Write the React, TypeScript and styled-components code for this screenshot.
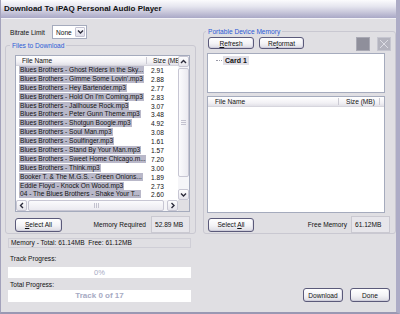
import React from 'react';
import styled, { createGlobalStyle } from 'styled-components';

const GlobalStyle = createGlobalStyle`
  * { box-sizing: border-box; }
  html, body { margin: 0; padding: 0; background: #e0dfe3; }
  body {
    font-family: "Liberation Sans", Arial, sans-serif;
    font-size: 6.6px;
    color: #111;
  }
`;

const files: [string, string][] = [
  ['Blues Brothers - Ghost Riders in the Sky...', '2.91'],
  ["Blues Brothers - Gimme Some Lovin'.mp3", '2.88'],
  ['Blues Brothers - Hey Bartender.mp3', '2.77'],
  ["Blues Brothers - Hold On I'm Coming.mp3", '2.83'],
  ['Blues Brothers - Jailhouse Rock.mp3', '3.07'],
  ['Blues Brothers - Peter Gunn Theme.mp3', '3.48'],
  ['Blues Brothers - Shotgun Boogie.mp3', '4.92'],
  ['Blues Brothers - Soul Man.mp3', '3.08'],
  ['Blues Brothers - Soulfinger.mp3', '1.61'],
  ['Blues Brothers - Stand By Your Man.mp3', '1.57'],
  ['Blues Brothers - Sweet Home Chicago.m...', '7.20'],
  ['Blues Brothers - Think.mp3', '3.00'],
  ['Booker T. & The M.G.S. - Green Onions...', '1.89'],
  ['Eddie Floyd - Knock On Wood.mp3', '2.73'],
  ['04 - The Blues Brothers - Shake Your T...', '2.60'],
];

const Window = styled.div`
  width: 400px;
  height: 314px;
  display: flex;
  flex-direction: column;
  background: #e0dfe3;
  border-left: 1px solid #a3a2bb;
  border-right: 4px solid #adacc6;
  border-bottom: 2px solid #9998b3;
  overflow: hidden;
`;

const TitleBar = styled.div`
  height: 19px;
  flex: none;
  display: flex;
  align-items: center;
  padding: 0 0 1px 3px;
  background: linear-gradient(#fbfbfd 0%, #e6e6ef 35%, #c6c5d9 70%, #a9a8c6 100%);
  border-bottom: 1px solid #f2f2f6;
  font-weight: bold;
  font-size: 8px;
  color: #111;
`;

const Content = styled.div`
  flex: 1;
  min-height: 0;
  display: grid;
  grid-template-columns: 192px 194px;
  column-gap: 6px;
  padding: 5px 0 10px 3px;
`;

const Column = styled.div`
  display: flex;
  flex-direction: column;
  min-width: 0;
`;

const BitrateRow = styled.div`
  height: 16px;
  display: flex;
  align-items: center;
  padding-left: 6px;
`;

const FieldLabel = styled.span`
  width: 42px;
`;

const Select = styled.div`
  width: 35px;
  height: 14px;
  display: flex;
  align-items: center;
  background: #fff;
  border: 1px solid #a5abbd;
  padding: 1px;
`;

const SelectValue = styled.span`
  flex: 1;
  padding-left: 2px;
`;

const SelectButton = styled.div`
  width: 10px;
  height: 100%;
  display: flex;
  align-items: center;
  justify-content: center;
  background: linear-gradient(#fbfbfd, #dedde8);
  border: 1px solid #c4c3d3;
  border-radius: 1px;
`;

const Group = styled.fieldset<{ $top: number; $pad: string }>`
  margin: ${p => p.$top}px 0 0 1px;
  padding: ${p => p.$pad};
  border: 1px solid #c9c8d1;
  border-radius: 3px;
  min-width: 0;
`;

const GroupTitle = styled.legend<{ $shift: number }>`
  padding: 0 2px;
  margin-left: ${p => p.$shift}px;
  line-height: 9px;
  color: #2c5bd6;
`;

const ListBox = styled.div<{ $height: number }>`
  height: ${p => p.$height}px;
  border: 1px solid #a5abbd;
  background: #fff;
  display: flex;
  flex-direction: column;
  overflow: hidden;
`;

const ScrollGrid = styled.div`
  flex: 1;
  min-height: 0;
  display: grid;
  grid-template-columns: 1fr 11px;
  grid-template-rows: 1fr 11px;
`;

const ListMain = styled.div`
  display: flex;
  flex-direction: column;
  overflow: hidden;
  min-width: 0;
`;

const ListHeader = styled.div`
  height: 10px;
  flex: none;
  display: flex;
  background: linear-gradient(#ffffff, #f2f1f5 65%, #e2e1e8);
  border-bottom: 1px solid #d6d5dd;
  overflow: hidden;
`;

const HeaderCell = styled.div<{ $width?: number; $pad: number }>`
  position: relative;
  flex: ${p => (p.$width ? 'none' : '1')};
  width: ${p => (p.$width ? `${p.$width}px` : 'auto')};
  padding-left: ${p => p.$pad}px;
  line-height: 9px;
  white-space: nowrap;
  overflow: hidden;
  &::after {
    content: '';
    position: absolute;
    right: 0;
    top: 1px;
    bottom: 1px;
    width: 1px;
    background: #cbcad3;
    box-shadow: 1px 0 0 #fff;
    display: ${p => (p.$width ? 'block' : 'none')};
  }
`;

const Rows = styled.div`
  flex: 1;
  overflow: hidden;
`;

const Row = styled.div`
  height: 8.9px;
  display: flex;
  align-items: center;
  white-space: nowrap;
`;

const NameCell = styled.div`
  width: 131px;
  flex: none;
  padding-left: 3px;
  overflow: hidden;
`;

const Highlight = styled.span`
  display: inline-block;
  max-width: 127px;
  overflow: hidden;
  padding: 0 1px;
  line-height: 8px;
  background: #b9b8c9;
  color: #111;
`;

const SizeCell = styled.div`
  padding-left: 4px;
`;

const VScroll = styled.div`
  display: flex;
  flex-direction: column;
  background: #f5f5f8;
`;

const HScroll = styled.div`
  display: flex;
  background: #f5f5f8;
`;

const ScrollButton = styled.div`
  width: 11px;
  height: 11px;
  flex: none;
  display: flex;
  align-items: center;
  justify-content: center;
  background: linear-gradient(#fdfdfe, #e5e4eb);
  border: 1px solid #c7c6d3;
  border-radius: 2px;
`;

const Thumb = styled.div<{ $vertical?: boolean }>`
  flex: 1;
  margin: ${p => (p.$vertical ? '1px 0 12px' : '0 3px 0 1px')};
  display: flex;
  align-items: center;
  justify-content: center;
  background: ${p =>
    p.$vertical ? 'linear-gradient(90deg, #fbfbfd, #ebeaf0)' : 'linear-gradient(#fbfbfd, #ebeaf0)'};
  border: 1px solid #c7c6d3;
  border-radius: 2px;
`;

const Corner = styled.div`
  background: #e0dfe3;
`;

const FooterRow = styled.div<{ $top: number }>`
  margin-top: ${p => p.$top}px;
  height: 17px;
  display: flex;
  align-items: center;
`;

const Button = styled.button<{ $width: number; $height?: number; $left?: number }>`
  width: ${p => p.$width}px;
  height: ${p => p.$height ?? 14}px;
  margin-left: ${p => p.$left ?? 0}px;
  flex: none;
  padding: 0;
  font: inherit;
  color: #111;
  border: 1px solid #5b5a7a;
  border-radius: 3px;
  background: linear-gradient(#ffffff, #f3f3f6 55%, #dcdbe3);
  box-shadow: inset 0 -1px 0 #cfcedb, inset -1px 0 0 #e2e1ea;
`;

const Caption = styled.span<{ $gap: number }>`
  margin-left: auto;
  margin-right: ${p => p.$gap}px;
`;

const ValueBox = styled.div`
  width: 39px;
  height: 17px;
  flex: none;
  padding-left: 3px;
  line-height: 15px;
  background: #e7e6eb;
  border: 1px solid #cac9d1;
`;

const StatusBox = styled.div`
  margin: 4px 0 0 4px;
  width: 183px;
  height: 10px;
  padding-left: 2px;
  line-height: 8px;
  border: 1px solid #cfced6;
  white-space: pre;
`;

const ProgressLabel = styled.div<{ $top: number }>`
  margin-top: ${p => p.$top}px;
  padding-left: 6px;
  line-height: 10px;
`;

const ProgressBar = styled.div<{ $height: number; $bold?: boolean }>`
  margin: ${p => (p.$bold ? 0 : 3)}px 0 0 4px;
  width: 183px;
  height: ${p => p.$height}px;
  line-height: ${p => p.$height}px;
  background: #fff;
  text-align: center;
  color: #a6aac3;
  font-size: ${p => (p.$bold ? 8 : 7.5)}px;
  font-weight: ${p => (p.$bold ? 'bold' : 'normal')};
`;

const DeviceToolbar = styled.div`
  height: 14px;
  display: flex;
  align-items: flex-start;
`;

const SquareButton = styled.div<{ $dark?: boolean; $left: number }>`
  width: 14px;
  height: 14px;
  margin-left: ${p => (p.$left < 0 ? 'auto' : `${p.$left}px`)};
  display: flex;
  align-items: center;
  justify-content: center;
  background: ${p => (p.$dark ? '#8f8f9b' : '#b3b3be')};
  border: 1px solid ${p => (p.$dark ? '#a9a9b4' : '#c6c6d0')};
`;

const TreeBox = styled.div`
  margin-top: 2px;
  width: 178px;
  height: 40px;
  padding-top: 2px;
  background: #fff;
  border: 1px solid #a5abbd;
`;

const TreeItem = styled.div`
  display: flex;
  align-items: center;
  height: 9px;
`;

const TreeLine = styled.span`
  width: 6px;
  margin-left: 8px;
  border-top: 1px dotted #9a9aa8;
`;

const TreeLabel = styled.span`
  margin-left: 1px;
  padding: 0 2px;
  line-height: 9px;
  font-weight: bold;
  font-size: 7px;
  background: #e1e0e7;
`;

const DialogButtons = styled.div`
  margin-top: auto;
  display: flex;
  justify-content: flex-end;
  gap: 7px;
  padding-right: 6px;
`;

const Chevron = ({ dir }: { dir: 'up' | 'down' | 'left' | 'right' }) => {
  const d = {
    up: 'M1 4 L3.5 1.5 L6 4',
    down: 'M1 1.5 L3.5 4 L6 1.5',
    left: 'M4 1 L1.5 3.5 L4 6',
    right: 'M1.5 1 L4 3.5 L1.5 6',
  }[dir];
  const vertical = dir === 'up' || dir === 'down';
  return (
    <svg width={vertical ? 7 : 5.5} height={vertical ? 5.5 : 7} viewBox={vertical ? '0 0 7 5.5' : '0 0 5.5 7'}>
      <path d={d} fill="none" stroke="#2b2b3a" strokeWidth="1.4" />
    </svg>
  );
};

const Grip = ({ vertical }: { vertical?: boolean }) => (
  <svg width={vertical ? 5 : 5} height={vertical ? 5 : 5} viewBox="0 0 5 5">
    {[0, 2, 4].map(i =>
      vertical ? (
        <line key={i} x1="0" x2="5" y1={i + 0.5} y2={i + 0.5} stroke="#c3c2cf" strokeWidth="1" />
      ) : (
        <line key={i} y1="0" y2="5" x1={i + 0.5} x2={i + 0.5} stroke="#c3c2cf" strokeWidth="1" />
      )
    )}
  </svg>
);

const FileList = () => (
  <ListBox $height={157}>
    <ScrollGrid>
      <ListMain>
        <ListHeader>
          <HeaderCell $width={131} $pad={6}>
            File Name
          </HeaderCell>
          <HeaderCell $pad={6}>Size (MB)</HeaderCell>
        </ListHeader>
        <Rows>
          {files.map(([name, size]) => (
            <Row key={name}>
              <NameCell>
                <Highlight>{name}</Highlight>
              </NameCell>
              <SizeCell>{size}</SizeCell>
            </Row>
          ))}
        </Rows>
      </ListMain>
      <VScroll>
        <ScrollButton>
          <Chevron dir="up" />
        </ScrollButton>
        <Thumb $vertical>
          <Grip vertical />
        </Thumb>
        <ScrollButton>
          <Chevron dir="down" />
        </ScrollButton>
      </VScroll>
      <HScroll>
        <ScrollButton>
          <Chevron dir="left" />
        </ScrollButton>
        <Thumb>
          <Grip />
        </Thumb>
        <ScrollButton>
          <Chevron dir="right" />
        </ScrollButton>
      </HScroll>
      <Corner />
    </ScrollGrid>
  </ListBox>
);

export default function App() {
  return (
    <>
      <GlobalStyle />
      <Window>
        <TitleBar>Download To iPAQ Personal Audio Player</TitleBar>
        <Content>
          <Column>
            <BitrateRow>
              <FieldLabel>Bitrate Limit</FieldLabel>
              <Select>
                <SelectValue>None</SelectValue>
                <SelectButton>
                  <Chevron dir="down" />
                </SelectButton>
              </Select>
            </BitrateRow>
            <Group $top={1} $pad="5px 5px 0 9px">
              <GroupTitle $shift={-5}>Files to Download</GroupTitle>
              <FileList />
              <FooterRow $top={4}>
                <Button $width={47}>
                  <u>S</u>elect All
                </Button>
                <Caption $gap={5}>Memory Required</Caption>
                <ValueBox>52.89 MB</ValueBox>
              </FooterRow>
            </Group>
            <StatusBox>Memory - Total: 61.14MB  Free: 61.12MB</StatusBox>
            <ProgressLabel $top={6}>Track Progress:</ProgressLabel>
            <ProgressBar $height={11}>0%</ProgressBar>
            <ProgressLabel $top={2}>Total Progress:</ProgressLabel>
            <ProgressBar $height={12} $bold>
              Track 0 of 17
            </ProgressBar>
          </Column>
          <Column>
            <Group $top={3} $pad="1px 4px 0 3px">
              <GroupTitle $shift={-1}>Portable Device Memory</GroupTitle>
              <DeviceToolbar>
                <Button $width={46} $height={12} $left={1}>
                  <u>R</u>efresh
                </Button>
                <Button $width={45} $height={12} $left={5}>
                  Re<u>f</u>ormat
                </Button>
                <SquareButton $dark $left={-1} />
                <SquareButton $left={7}>
                  <svg width="10" height="10" viewBox="0 0 10 10">
                    <path d="M1 1 L9 9 M9 1 L1 9" stroke="#dcdce4" strokeWidth="1" />
                  </svg>
                </SquareButton>
              </DeviceToolbar>
              <TreeBox>
                <TreeItem>
                  <TreeLine />
                  <TreeLabel>Card 1</TreeLabel>
                </TreeItem>
              </TreeBox>
              <ListBox $height={117} style={{ marginTop: 3, width: 178 }}>
                <ListHeader>
                  <HeaderCell $width={131} $pad={7}>
                    File Name
                  </HeaderCell>
                  <HeaderCell $width={41} $pad={7}>
                    Size (MB)
                  </HeaderCell>
                  <HeaderCell $pad={0} />
                </ListHeader>
              </ListBox>
              <FooterRow $top={3}>
                <Button $width={46} $left={1}>
                  Select <u>A</u>ll
                </Button>
                <Caption $gap={4}>Free Memory</Caption>
                <ValueBox style={{ marginRight: 1 }}>61.12MB</ValueBox>
              </FooterRow>
            </Group>
            <DialogButtons>
              <Button $width={40}>Download</Button>
              <Button $width={40}>Done</Button>
            </DialogButtons>
          </Column>
        </Content>
      </Window>
    </>
  );
}
